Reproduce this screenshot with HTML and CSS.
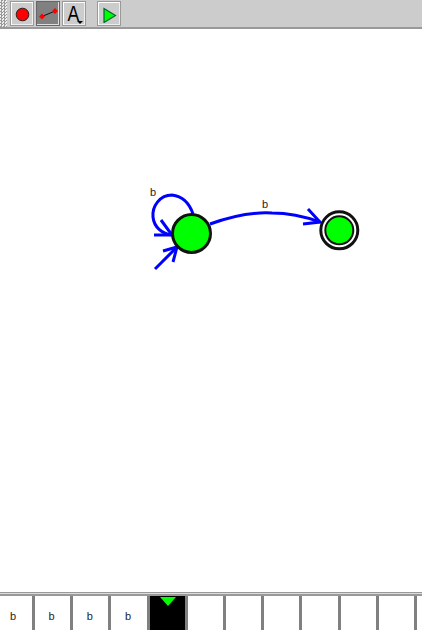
FILE: index.html
```html
<!DOCTYPE html>
<html lang="en">
<head>
    <meta charset="UTF-8">
    <title>Automaton Editor</title>
    <link rel="stylesheet" href="styles.css">
</head>
<body>

    <div class="toolbar">
        <div class="grip"></div>
        <button class="tool">
            <svg width="18" height="18" viewBox="0 0 18 18"><circle cx="9.500" cy="9.500" r="6.300" fill="#f00" stroke="#222" stroke-width="1"/></svg>
        </button>
        <button class="tool tool-active">
            <svg width="22" height="18" viewBox="0 0 22 18">
                <path d="M5 11.500 L18 6" stroke="#111" stroke-width="1"/>
                <path d="M5 8.500 L8 11.500 L5 14.500 L2 11.500 Z" fill="#f00"/>
                <path d="M18 3 L21 6 L18 9 L15 6 Z" fill="#f00"/>
            </svg>
        </button>
        <button class="tool tool-text">
            <span class="tool-letter">A</span>
            <span class="caret"></span>
        </button>
        <button class="tool tool-run">
            <svg width="16" height="18" viewBox="0 0 16 18"><path d="M3 3.500 L14.500 10.500 L3 17.500 Z" fill="#0f0" stroke="#063" stroke-width="1.200"/></svg>
        </button>
    </div>

    <svg class="canvas" width="422" height="563" viewBox="0 29 422 563">
        <!-- loop on first state -->
        <path class="edge" d="M193 214 C189 202 181 196 172 195 C160 195 152 206 153 217 C154 227 162 234 172 235"/>
        <path class="edge" d="M161 220 L172 235 L154 235"/>
        <!-- start arrow -->
        <path class="edge" d="M155 269 L177 247"/>
        <path class="edge" d="M163 251 L177 247 L173 262"/>
        <!-- transition -->
        <path class="edge" d="M210 224 C232 216 254 212 272 213 C290 213 306 217 320 222"/>
        <path class="edge" d="M308 209 L320 222 L303 224"/>

        <circle cx="191.500" cy="233.500" r="19" fill="#0f0" stroke="#111" stroke-width="3"/>
        <circle cx="339.300" cy="230.300" r="18.500" fill="#fff" stroke="#111" stroke-width="3"/>
        <circle cx="339.300" cy="230.300" r="14" fill="#0f0" stroke="#111" stroke-width="2"/>

        <text class="label" x="150" y="196">b</text>
        <text class="label" x="262" y="208">b</text>
    </svg>

    <div class="tape">
        <div class="cell"><span class="symbol">b</span></div>
        <div class="cell"><span class="symbol">b</span></div>
        <div class="cell"><span class="symbol">b</span></div>
        <div class="cell"><span class="symbol">b</span></div>
        <div class="cell cell-head"><span class="head"></span></div>
        <div class="cell"></div>
        <div class="cell"></div>
        <div class="cell"></div>
        <div class="cell"></div>
        <div class="cell"></div>
        <div class="cell"></div>
        <div class="cell cell-end"></div>
    </div>

</body>
</html>
```

FILE: styles.css
```css
body {
    font-family: "Liberation Sans", Arial, sans-serif;
    background-color: #fff;
    margin: 0;
    width: 422px;
    height: 630px;
    overflow: hidden;
    display: flex;
    flex-direction: column;
}
.toolbar {
    height: 27px;
    background-color: #ccc;
    border-bottom: 2px solid #999;
    display: flex;
    align-items: center;
    flex-shrink: 0;
}
.grip {
    width: 7px;
    height: 27px;
    margin-right: 3px;
    background-image: repeating-conic-gradient(#999 0 25%, #eee 0 50%);
    background-size: 3px 3px;
}
.tool {
    width: 24px;
    height: 25px;
    margin: 0 2px 0 0;
    padding: 0;
    box-sizing: border-box;
    background-color: #ccc;
    border: 1px solid #999;
    box-shadow: inset 1px 1px 0 #fff, inset -1px -1px 0 #eee;
    display: flex;
    align-items: center;
    justify-content: center;
    position: relative;
}
.tool-active {
    background-color: #808080;
    border-color: #666;
    box-shadow: inset -1px -1px 0 #ddd;
}
.tool-text {
    margin-right: 11px;
}
.tool-letter {
    font-size: 22px;
    line-height: 25px;
    color: #000;
    margin-right: 1px;
    transform: scaleX(0.8);
}
.caret {
    position: absolute;
    right: 2px;
    bottom: 1px;
    border-left: 3px solid transparent;
    border-right: 3px solid transparent;
    border-top: 3px solid #000;
}
.canvas {
    display: block;
    flex: 1;
    min-height: 0;
}
.edge {
    fill: none;
    stroke: #00f;
    stroke-width: 3;
}
.label {
    font-size: 11px;
    fill: #222;
    opacity: 0.99;
}
.tape {
    height: 37px;
    flex-shrink: 0;
    display: flex;
    overflow: hidden;
    border-top: 1px solid #999;
    background-color: #fff;
    box-shadow: inset 0 1px 0 #ddd, inset 0 3px 0 #999;
}
.cell {
    width: 38.200px;
    flex-shrink: 0;
    box-sizing: border-box;
    margin-top: 3px;
    border-right: 3px solid #808080;
    font-size: 11px;
    color: #222;
    text-align: center;
    padding: 14px 2px 0 0;
}
.symbol {
    display: inline-block;
    opacity: 0.99;
}
.cell:first-child {
    width: 35px;
    padding-right: 6px;
}
.cell-end {
    width: 5px;
    border-right: none;
}
.cell-head {
    background-color: #000;
    position: relative;
    padding-top: 0;
}
.head {
    position: absolute;
    left: 10px;
    top: 1px;
    border-left: 8px solid transparent;
    border-right: 8px solid transparent;
    border-top: 9px solid #0f0;
}
```
